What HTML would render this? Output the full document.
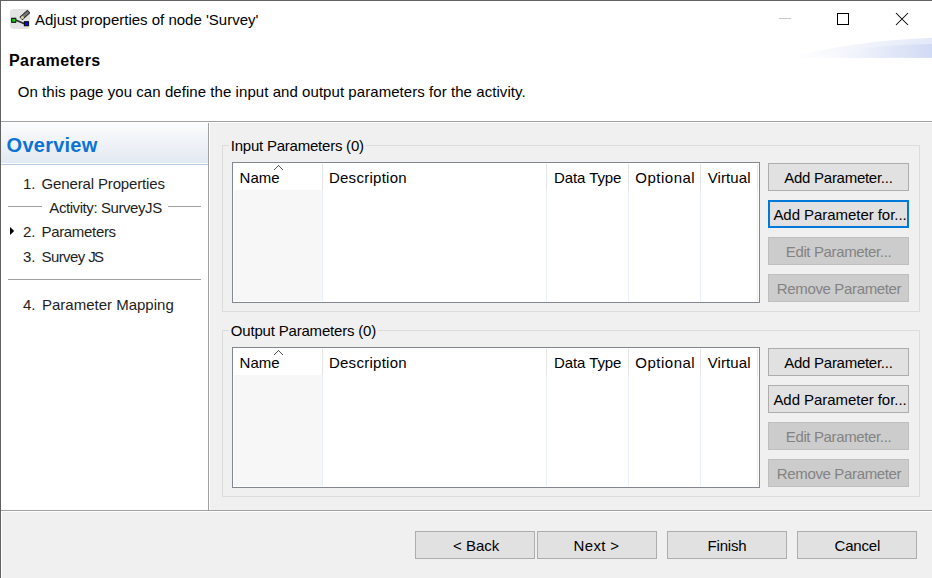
<!DOCTYPE html>
<html><head><meta charset="utf-8">
<style>
*{margin:0;padding:0;box-sizing:border-box}
html,body{width:932px;height:578px;overflow:hidden;background:#f0f0f0}
body{position:relative;font-family:"Liberation Sans",sans-serif;font-size:15px;color:#000}
.a{position:absolute}
.t{position:absolute;white-space:nowrap;line-height:15px;height:15px}
.btn{position:absolute;width:141px;height:28px;background:#e1e1e1;border:1px solid #adadad}
.btn.dis{background:#cccccc;border-color:#bfbfbf;color:#838383}
.btn.foc{border:2px solid #0078d7}
.bb{position:absolute;width:120px;height:28px;background:#e1e1e1;border:1px solid #adadad}
.gl{position:absolute;background:#dcdcdc}
.wl{position:absolute;background:#fff}
.tbl{position:absolute;background:#fff;border:1px solid #828790}
</style></head><body>

<!-- window border -->
<div class="a" style="left:0;top:0;width:932px;height:1px;background:#626262"></div>
<div class="a" style="left:0;top:0;width:1px;height:578px;background:#616161"></div>

<!-- header white -->
<div class="a" style="left:1px;top:1px;width:931px;height:120px;background:#fff"></div>
<div class="a" style="left:1px;top:121px;width:931px;height:1px;background:#a0a0a0"></div>
<div class="a" style="left:1px;top:122px;width:931px;height:1px;background:#fff"></div>

<!-- title icon -->
<svg class="a" style="left:10px;top:9px" width="20" height="20" viewBox="0 0 20 20">
  <rect x="0" y="0" width="20" height="20" rx="3.5" fill="#e3e3e3"/>
  <line x1="5.5" y1="11" x2="14.5" y2="14.8" stroke="#2a2a2a" stroke-width="1.6"/>
  <rect x="1.7" y="9.3" width="4" height="4" fill="#00e000" stroke="#0a0a0a" stroke-width="1.1"/>
  <rect x="14.4" y="12.7" width="4" height="4" fill="#0010f0" stroke="#0a0a0a" stroke-width="1.1"/>
  <line x1="10.9" y1="9.6" x2="18.9" y2="2.3" stroke="#262626" stroke-width="4.4"/>
  <line x1="12.4" y1="8.2" x2="18.4" y2="2.8" stroke="#7a7a7a" stroke-width="2.4"/>
  <circle cx="12.4" cy="8.4" r="1.5" fill="#dcd99c"/>
</svg>
<div class="t" style="left:35px;top:12px">Adjust properties of node 'Survey'</div>

<!-- window controls -->
<div class="a" style="left:779px;top:18px;width:12px;height:1px;background:#c8c8c8"></div>
<div class="a" style="left:837px;top:13px;width:12px;height:12px;border:1px solid #000"></div>
<svg class="a" style="left:895px;top:12px" width="14" height="14" viewBox="0 0 14 14">
  <path d="M1 1 L13 13 M13 1 L1 13" stroke="#000" stroke-width="1.05"/>
</svg>

<!-- swoosh -->
<svg class="a" style="left:782px;top:30px" width="150" height="35" viewBox="0 0 150 35">
  <defs><linearGradient id="sg" x1="10" x2="150" y1="0" y2="0" gradientUnits="userSpaceOnUse">
    <stop offset="0" stop-color="#ffffff"/><stop offset="0.3" stop-color="#f6f8fd"/><stop offset="1" stop-color="#e3e9f8"/></linearGradient>
  <linearGradient id="sg2" x1="30" x2="150" y1="0" y2="0" gradientUnits="userSpaceOnUse">
    <stop offset="0" stop-color="#ffffff"/><stop offset="0.4" stop-color="#eef2fb"/><stop offset="1" stop-color="#d1daf4"/></linearGradient></defs>
  <path d="M10 27.8 Q 60 12 150 7.7 L150 27.8 Z" fill="url(#sg)"/>
  <path d="M30 27.8 Q 80 15 150 14 L150 27.8 Z" fill="url(#sg2)"/>
</svg>

<div class="t" style="left:9px;top:53px;font-weight:bold;font-size:16px;line-height:16px;letter-spacing:0.45px">Parameters</div>
<div class="t" style="left:17.7px;top:84px;letter-spacing:0.06px">On this page you can define the input and output parameters for the activity.</div>

<!-- left panel -->
<div class="a" style="left:1px;top:123px;width:207px;height:387px;background:#fff"></div>
<div class="a" style="left:1px;top:123px;width:207px;height:40px;background:linear-gradient(#fbfcfd,#e3e9f1)"></div>
<div class="a" style="left:1px;top:164px;width:207px;height:1px;background:#b8cbe0"></div>
<div class="t" style="left:6.6px;top:135px;font-weight:bold;font-size:20px;line-height:20px;color:#0d72d4;letter-spacing:0.25px">Overview</div>

<div class="t" style="left:23px;top:176px;color:#1e1e1e">1.</div>
<div class="t" style="left:41.5px;top:176px;color:#1e1e1e;letter-spacing:-0.14px">General Properties</div>
<div class="a" style="left:8px;top:206px;width:34px;height:1px;background:#a0a0a0"></div>
<div class="t" style="left:49.3px;top:200px;color:#1e1e1e;letter-spacing:-0.42px">Activity: SurveyJS</div>
<div class="a" style="left:168px;top:206px;width:33px;height:1px;background:#a0a0a0"></div>
<svg class="a" style="left:10px;top:227px" width="6" height="9" viewBox="0 0 6 9"><path d="M0 0 L4.2 4 L0 8 Z" fill="#000"/></svg>
<div class="t" style="left:23px;top:224px;color:#1e1e1e">2.</div>
<div class="t" style="left:41.5px;top:224px;color:#1e1e1e;letter-spacing:-0.33px">Parameters</div>
<div class="t" style="left:23px;top:249px;color:#1e1e1e">3.</div>
<div class="t" style="left:41.5px;top:249px;color:#1e1e1e;letter-spacing:-0.6px">Survey <span style="letter-spacing:-1.6px">J</span>S</div>
<div class="a" style="left:8px;top:279px;width:193px;height:1px;background:#a0a0a0"></div>
<div class="t" style="left:23px;top:297px;color:#1e1e1e">4.</div>
<div class="t" style="left:42px;top:297px;color:#1e1e1e">Parameter Mapping</div>

<!-- splitter -->
<div class="a" style="left:208px;top:123px;width:1px;height:388px;background:#a0a0a0"></div>
<div class="a" style="left:209px;top:123px;width:1px;height:387px;background:#fff"></div>

<!-- bottom separator -->
<div class="a" style="left:1px;top:510px;width:931px;height:1px;background:#a0a0a0"></div>
<div class="a" style="left:1px;top:511px;width:931px;height:1px;background:#fff"></div>
<div class="a" style="left:1px;top:511px;width:1px;height:67px;background:#fff"></div>

<!--G-->
<div class="a" style="left:0;top:0px;width:932px;height:185px">
<div class="a" style="left:222px;top:145px;width:698px;height:167px;border:1px solid #dcdcdc"></div>
<div class="a" style="left:229px;top:140px;width:137px;height:10px;background:#f0f0f0"></div>
<div class="t" style="left:230.8px;top:138px;letter-spacing:-0.23px">Input Parameters (0)</div>
<div class="tbl" style="left:232px;top:162px;width:528px;height:141px"></div>
<div class="a" style="left:234px;top:190px;width:88px;height:111px;background:#f7f7f7"></div>
<div class="a" style="left:322px;top:164px;width:1px;height:26px;background:#e5e5e5"></div>
<div class="a" style="left:322px;top:190px;width:1px;height:111px;background:#e8f0fb"></div>
<div class="a" style="left:546px;top:164px;width:1px;height:26px;background:#e5e5e5"></div>
<div class="a" style="left:546px;top:190px;width:1px;height:111px;background:#e8f0fb"></div>
<div class="a" style="left:628px;top:164px;width:1px;height:26px;background:#e5e5e5"></div>
<div class="a" style="left:628px;top:190px;width:1px;height:111px;background:#e8f0fb"></div>
<div class="a" style="left:700px;top:164px;width:1px;height:26px;background:#e5e5e5"></div>
<div class="a" style="left:700px;top:190px;width:1px;height:111px;background:#e8f0fb"></div>
<div class="a" style="left:757px;top:164px;width:1px;height:26px;background:#e5e5e5"></div>
<div class="a" style="left:757px;top:190px;width:1px;height:111px;background:#e8f0fb"></div>
<div class="t" style="left:239.6px;top:170px;letter-spacing:0px">Name</div>
<div class="t" style="left:328.9px;top:170px;letter-spacing:0.27px">Description</div>
<div class="t" style="left:554px;top:170px;letter-spacing:-0.08px">Data Type</div>
<div class="t" style="left:635.3px;top:170px;letter-spacing:0.5px">Optional</div>
<div class="t" style="left:707.7px;top:170px;letter-spacing:0.1px">Virtual</div>
<svg class="a" style="left:274px;top:165px" width="9" height="5" viewBox="0 0 9 5" shape-rendering="crispEdges"><path d="M0 4h1v1h-1zM1 3h1v1h-1zM2 2h1v1h-1zM3 1h1v1h-1zM4 0h1v1h-1zM5 1h1v1h-1zM6 2h1v1h-1zM7 3h1v1h-1zM8 4h1v1h-1z" fill="#505050"/></svg>
<div class="btn" style="left:768px;top:163px"></div>
<div class="t" style="left:784.3px;top:170px;letter-spacing:-0.27px">Add Parameter...</div>
<div class="btn foc" style="left:768px;top:200px"></div>
<div class="t" style="left:773.4px;top:207px;letter-spacing:-0.05px">Add Parameter for...</div>
<div class="btn dis" style="left:768px;top:237px"></div>
<div class="t" style="left:785.8px;top:244px;color:#838383;letter-spacing:-0.37px">Edit Parameter...</div>
<div class="btn dis" style="left:768px;top:274px"></div>
<div class="t" style="left:776.8px;top:281px;color:#838383;letter-spacing:-0.35px">Remove Parameter</div>
</div>
<div class="a" style="left:0;top:185px;width:932px;height:185px">
<div class="a" style="left:222px;top:145px;width:698px;height:167px;border:1px solid #dcdcdc"></div>
<div class="a" style="left:229px;top:140px;width:149px;height:10px;background:#f0f0f0"></div>
<div class="t" style="left:230.8px;top:138px;letter-spacing:-0.19px">Output Parameters (0)</div>
<div class="tbl" style="left:232px;top:162px;width:528px;height:141px"></div>
<div class="a" style="left:234px;top:190px;width:88px;height:111px;background:#f7f7f7"></div>
<div class="a" style="left:322px;top:164px;width:1px;height:26px;background:#e5e5e5"></div>
<div class="a" style="left:322px;top:190px;width:1px;height:111px;background:#e8f0fb"></div>
<div class="a" style="left:546px;top:164px;width:1px;height:26px;background:#e5e5e5"></div>
<div class="a" style="left:546px;top:190px;width:1px;height:111px;background:#e8f0fb"></div>
<div class="a" style="left:628px;top:164px;width:1px;height:26px;background:#e5e5e5"></div>
<div class="a" style="left:628px;top:190px;width:1px;height:111px;background:#e8f0fb"></div>
<div class="a" style="left:700px;top:164px;width:1px;height:26px;background:#e5e5e5"></div>
<div class="a" style="left:700px;top:190px;width:1px;height:111px;background:#e8f0fb"></div>
<div class="a" style="left:757px;top:164px;width:1px;height:26px;background:#e5e5e5"></div>
<div class="a" style="left:757px;top:190px;width:1px;height:111px;background:#e8f0fb"></div>
<div class="t" style="left:239.6px;top:170px;letter-spacing:0px">Name</div>
<div class="t" style="left:328.9px;top:170px;letter-spacing:0.27px">Description</div>
<div class="t" style="left:554px;top:170px;letter-spacing:-0.08px">Data Type</div>
<div class="t" style="left:635.3px;top:170px;letter-spacing:0.5px">Optional</div>
<div class="t" style="left:707.7px;top:170px;letter-spacing:0.1px">Virtual</div>
<svg class="a" style="left:274px;top:165px" width="9" height="5" viewBox="0 0 9 5" shape-rendering="crispEdges"><path d="M0 4h1v1h-1zM1 3h1v1h-1zM2 2h1v1h-1zM3 1h1v1h-1zM4 0h1v1h-1zM5 1h1v1h-1zM6 2h1v1h-1zM7 3h1v1h-1zM8 4h1v1h-1z" fill="#505050"/></svg>
<div class="btn" style="left:768px;top:163px"></div>
<div class="t" style="left:784.3px;top:170px;letter-spacing:-0.27px">Add Parameter...</div>
<div class="btn" style="left:768px;top:200px"></div>
<div class="t" style="left:773.4px;top:207px;letter-spacing:-0.05px">Add Parameter for...</div>
<div class="btn dis" style="left:768px;top:237px"></div>
<div class="t" style="left:785.8px;top:244px;color:#838383;letter-spacing:-0.37px">Edit Parameter...</div>
<div class="btn dis" style="left:768px;top:274px"></div>
<div class="t" style="left:776.8px;top:281px;color:#838383;letter-spacing:-0.35px">Remove Parameter</div>
</div>
<!--/G-->

<!-- bottom buttons -->
<div class="bb" style="left:415px;top:531px"></div>
<div class="bb" style="left:537px;top:531px"></div>
<div class="bb" style="left:667px;top:531px"></div>
<div class="bb" style="left:797px;top:531px"></div>
<div class="t" style="left:453px;top:538px">&lt; Back</div>
<div class="t" style="left:573.6px;top:538px;letter-spacing:0.35px">Next &gt;</div>
<div class="t" style="left:707.6px;top:538px;letter-spacing:-0.2px">Finish</div>
<div class="t" style="left:834.6px;top:538px;letter-spacing:-0.2px">Cancel</div>

</body></html>
